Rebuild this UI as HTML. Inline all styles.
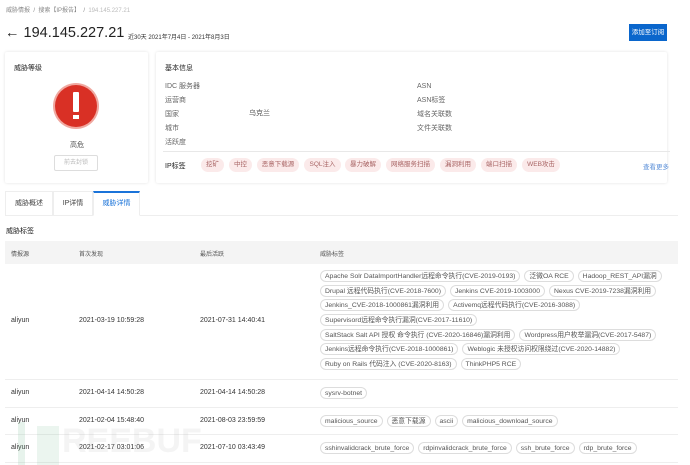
<!DOCTYPE html>
<html><head><meta charset="utf-8"><style>
*{margin:0;padding:0;box-sizing:border-box}
body{width:690px;height:465px;background:#fff;font-family:"Liberation Sans","Noto Sans CJK SC",sans-serif;color:#333;position:relative;overflow:hidden;font-size:7px}
.a{position:absolute;white-space:nowrap}
.card{position:absolute;background:#fff;box-shadow:0 0 3px rgba(0,0,0,.12);border-radius:2px}
.tag{position:absolute;height:14px;line-height:14px;border-radius:7px;background:#fbeaea;color:#a86464;font-size:6.5px;text-align:center}
.pill{display:inline-block;height:12px;line-height:11px;border:1px solid #ddd;border-radius:6px;padding:0 4px;font-size:6.8px;color:#555;margin-right:4px}
.tl{position:absolute;left:320px;white-space:nowrap}
.hr{position:absolute;left:5px;width:673px;height:1px;background:#eee}
</style></head><body>
<div class="a" style="left:6px;top:5px;font-size:6px;color:#888">威胁情报 &nbsp;/&nbsp; 搜索【IP报告】 &nbsp;/&nbsp; <span style="color:#bbb">194.145.227.21</span></div>
<div class="a" style="left:5px;top:25px;font-size:14.5px;color:#222">← 194.145.227.21</div>
<div class="a" style="left:128px;top:32px;font-size:6px;color:#333">近30天 2021年7月4日 - 2021年8月3日</div>
<div class="a" style="left:629px;top:24px;width:38px;height:17px;background:#0a66cc;color:#fff;font-size:6.5px;line-height:17px;text-align:center">添加至订阅</div>

<div class="card" style="left:5px;top:52px;width:143px;height:131px"></div>
<div class="a" style="left:14px;top:63px;font-size:7px;color:#222">威胁等级</div>
<div class="a" style="left:55px;top:85px;width:42px;height:42px;border-radius:50%;background:#d93025;box-shadow:0 0 0 2px #f0a8a0"></div>
<div class="a" style="left:73px;top:92px;width:6px;height:20px;background:#fff;border-radius:1px"></div>
<div class="a" style="left:73px;top:115px;width:6px;height:4px;background:#fff"></div>
<div class="a" style="left:70px;top:140px;font-size:7px;color:#555">高危</div>
<div class="a" style="left:54px;top:155px;width:44px;height:16px;border:1px solid #ddd;border-radius:2px;color:#bbb;font-size:6px;line-height:14px;text-align:center">前去封锁</div>

<div class="card" style="left:156px;top:52px;width:511px;height:131px"></div>
<div class="a" style="left:165px;top:63px;font-size:7px;color:#222">基本信息</div>
<div class="a" style="left:165px;top:80px;color:#666;line-height:14px">IDC 服务器<br>运营商<br>国家<br>城市<br>活跃度</div>
<div class="a" style="left:249px;top:108px;color:#555">乌克兰</div>
<div class="a" style="left:417px;top:80px;color:#666;line-height:14px">ASN<br>ASN标签<br>域名关联数<br>文件关联数</div>
<div class="a" style="left:163px;top:151px;width:507px;height:1px;background:#e8e8e8"></div>
<div class="a" style="left:165px;top:161px;font-size:7px;color:#222">IP标签</div>
<div class="tag" style="left:201px;top:158px;width:23px">挖矿</div>
<div class="tag" style="left:229px;top:158px;width:23px">中控</div>
<div class="tag" style="left:257px;top:158px;width:42px">恶意下载源</div>
<div class="tag" style="left:304px;top:158px;width:37px">SQL注入</div>
<div class="tag" style="left:345px;top:158px;width:36px">暴力破解</div>
<div class="tag" style="left:386px;top:158px;width:49px">网络服务扫描</div>
<div class="tag" style="left:440px;top:158px;width:36px">漏洞利用</div>
<div class="tag" style="left:481px;top:158px;width:36px">端口扫描</div>
<div class="tag" style="left:522px;top:158px;width:38px">WEB攻击</div>
<div class="a" style="left:643px;top:161px;color:#5a8fd8;font-size:6.5px">查看更多</div>

<div class="a" style="left:5px;top:215px;width:673px;height:1px;background:#eee"></div>
<div class="a" style="left:5px;top:191px;width:48px;height:25px;border:1px solid #eee;border-bottom:none;font-size:7px;line-height:24px;text-align:center;color:#444">威胁概述</div>
<div class="a" style="left:53px;top:191px;width:40px;height:25px;border:1px solid #eee;border-bottom:none;font-size:7px;line-height:24px;text-align:center;color:#444">IP详情</div>
<div class="a" style="left:93px;top:191px;width:47px;height:25px;border:1px solid #eee;border-top:2px solid #1a73d9;border-bottom:1px solid #fff;background:#fff;font-size:7px;line-height:22px;text-align:center;color:#1a73d9">威胁详情</div>

<div class="a" style="left:6px;top:226px;font-size:7px;color:#222">威胁标签</div>
<div class="a" style="left:5px;top:241px;width:673px;height:23px;background:#f4f4f4"></div>
<div class="a" style="left:11px;top:249px;color:#555;font-size:6px">情报源</div>
<div class="a" style="left:79px;top:249px;color:#555;font-size:6px">首次发现</div>
<div class="a" style="left:200px;top:249px;color:#555;font-size:6px">最后活跃</div>
<div class="a" style="left:320px;top:249px;color:#555;font-size:6px">威胁标签</div>

<div class="a" style="left:11px;top:317px">aliyun</div>
<div class="a" style="left:79px;top:317px">2021-03-19 10:59:28</div>
<div class="a" style="left:200px;top:317px">2021-07-31 14:40:41</div>
<div class="tl" style="top:270px"><span class="pill">Apache Solr DataImportHandler远程命令执行(CVE-2019-0193)</span><span class="pill">泛微OA RCE</span><span class="pill">Hadoop_REST_API漏洞</span></div>
<div class="tl" style="top:285px"><span class="pill">Drupal 远程代码执行(CVE-2018-7600)</span><span class="pill">Jenkins CVE-2019-1003000</span><span class="pill">Nexus CVE-2019-7238漏洞利用</span></div>
<div class="tl" style="top:299px"><span class="pill">Jenkins_CVE-2018-1000861漏洞利用</span><span class="pill">Activemq远程代码执行(CVE-2016-3088)</span></div>
<div class="tl" style="top:314px"><span class="pill">Supervisord远程命令执行漏洞(CVE-2017-11610)</span></div>
<div class="tl" style="top:329px"><span class="pill">SaltStack Salt API 授权 命令执行 (CVE-2020-16846)漏洞利用</span><span class="pill">Wordpress用户枚举漏洞(CVE-2017-5487)</span></div>
<div class="tl" style="top:343px"><span class="pill">Jenkins远程命令执行(CVE-2018-1000861)</span><span class="pill">Weblogic 未授权访问权限绕过(CVE-2020-14882)</span></div>
<div class="tl" style="top:358px"><span class="pill">Ruby on Rails 代码注入 (CVE-2020-8163)</span><span class="pill">ThinkPHP5 RCE</span></div>
<div class="hr" style="top:379px"></div>

<div class="a" style="left:11px;top:389px">aliyun</div>
<div class="a" style="left:79px;top:389px">2021-04-14 14:50:28</div>
<div class="a" style="left:200px;top:389px">2021-04-14 14:50:28</div>
<div class="tl" style="top:387px"><span class="pill">sysrv-botnet</span></div>
<div class="hr" style="top:407px"></div>

<div class="a" style="left:11px;top:417px">aliyun</div>
<div class="a" style="left:79px;top:417px">2021-02-04 15:48:40</div>
<div class="a" style="left:200px;top:417px">2021-08-03 23:59:59</div>
<div class="tl" style="top:415px"><span class="pill">malicious_source</span><span class="pill">恶意下载源</span><span class="pill">ascii</span><span class="pill">malicious_download_source</span></div>
<div class="hr" style="top:434px"></div>

<div class="a" style="left:11px;top:444px">aliyun</div>
<div class="a" style="left:79px;top:444px">2021-02-17 03:01:06</div>
<div class="a" style="left:200px;top:444px">2021-07-10 03:43:49</div>
<div class="tl" style="top:442px"><span class="pill">sshinvalidcrack_brute_force</span><span class="pill">rdpinvalidcrack_brute_force</span><span class="pill">ssh_brute_force</span><span class="pill">rdp_brute_force</span></div>
<div class="hr" style="top:462px"></div>

<div class="a" style="left:18px;top:422px;width:7px;height:43px;background:rgba(120,190,150,.18)"></div>
<div class="a" style="left:37px;top:426px;width:22px;height:39px;background:rgba(120,190,150,.15)"></div>
<div class="a" style="left:62px;top:422px;font-size:34px;font-weight:bold;color:rgba(180,180,180,.15)">REEBUF</div>
</body></html>
